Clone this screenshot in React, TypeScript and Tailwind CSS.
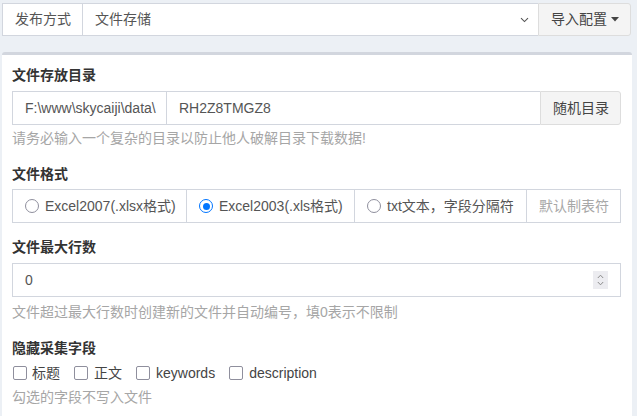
import React from "react";

const font = { fontFamily: '"Liberation Sans", "Noto Sans CJK SC", sans-serif' };

function Radio({ checked }: { checked?: boolean }) {
  return checked ? (
    <span className="flex w-[14px] h-[14px] rounded-full border-[1.5px] border-[#0075ff] items-center justify-center shrink-0">
      <span className="block w-[7px] h-[7px] rounded-full bg-[#0075ff]" />
    </span>
  ) : (
    <span className="block w-[14px] h-[14px] rounded-full border-[1.5px] border-[#8f8f9d] shrink-0" />
  );
}

function Check() {
  return <span className="block w-[14px] h-[14px] rounded-[2px] border-[1.5px] border-[#8f8f9d] shrink-0" />;
}

export default function App() {
  return (
    <div style={font} className="bg-[#ecf0f5] h-[416px] w-[637px] pl-[2px] pr-[6px] pt-[3px] text-[14px] text-[#555] overflow-hidden">
      {/* top group */}
      <div className="flex h-[33px] w-[629px]">
        <div className="w-[81px] flex items-center pl-[12px] bg-white border border-[#d2d6de] text-[#555]">发布方式</div>
        <div className="flex-1 flex items-center justify-between pl-[12px] pr-[8px] bg-white border-y border-[#d2d6de]">
          <span>文件存储</span>
          <svg width="9" height="6" viewBox="0 0 9 6" className="mr-[1px]">
            <path d="M1 1.2 L4.5 4.6 L8 1.2" fill="none" stroke="#555" strokeWidth="1.1" />
          </svg>
        </div>
        <div className="w-[93px] flex items-center pl-[12px] bg-[#f4f4f4] border border-[#ddd] rounded-r-[3px] text-[#444]">
          导入配置
          <svg width="8" height="5" viewBox="0 0 8 5" className="ml-[4px]">
            <path d="M0 0 L8 0 L4 4.5 Z" fill="#444" />
          </svg>
        </div>
      </div>

      {/* panel */}
      <div className="mt-[16px] w-[630px] h-[400px] bg-white border-t-[3px] border-[#d2d6de] rounded-t-[3px] px-[10px] pt-[10px]">
        <div className="font-bold text-[#333] leading-[20px]">文件存放目录</div>
        <div className="mt-[6px] flex h-[34px] w-[609px]">
          <div className="w-[155px] flex items-center pl-[12px] border border-[#d2d6de] text-[#555]">F:\www\skycaiji\data\</div>
          <div className="flex-1 flex items-center pl-[12px] border-y border-[#d2d6de]">RH2Z8TMGZ8</div>
          <div className="w-[81px] flex items-center pl-[12px] bg-[#f4f4f4] border border-[#ddd] rounded-r-[3px] text-[#444]">随机目录</div>
        </div>
        <div className="mt-[3px] text-[14px] leading-[20px] text-[#a6a6a6]">请务必输入一个复杂的目录以防止他人破解目录下载数据!</div>

        <div className="mt-[16px] font-bold text-[#333] leading-[20px]">文件格式</div>
        <div className="mt-[5px] flex h-[34px] w-[609px] border border-[#d2d6de]">
          <div className="w-[174px] flex items-center pl-[12px] gap-[6px] border-r border-[#d2d6de]">
            <Radio />
            <span>Excel2007(.xlsx格式)</span>
          </div>
          <div className="w-[168px] flex items-center pl-[12px] gap-[6px] border-r border-[#d2d6de]">
            <Radio checked />
            <span>Excel2003(.xls格式)</span>
          </div>
          <div className="w-[172px] flex items-center pl-[12px] gap-[6px] border-r border-[#d2d6de]">
            <Radio />
            <span>txt文本，字段分隔符</span>
          </div>
          <div className="flex-1 flex items-center pl-[12px] text-[#a8a8a8]">默认制表符</div>
        </div>

        <div className="mt-[14px] font-bold text-[#333] leading-[20px]">文件最大行数</div>
        <div className="mt-[6px] relative flex items-center h-[34px] w-[609px] border border-[#d2d6de] pl-[12px]">
          0
          <div className="absolute right-[12px] top-[7px] w-[15px] h-[18px] bg-[#ececf0] flex flex-col items-center justify-center gap-[2px]">
            <svg width="7" height="5" viewBox="0 0 7 5">
              <path d="M0.8 4 L3.5 1.2 L6.2 4" fill="none" stroke="#8a8a8a" strokeWidth="1" />
            </svg>
            <svg width="7" height="5" viewBox="0 0 7 5">
              <path d="M0.8 1 L3.5 3.8 L6.2 1" fill="none" stroke="#8a8a8a" strokeWidth="1" />
            </svg>
          </div>
        </div>
        <div className="mt-[5px] text-[14px] leading-[20px] text-[#a6a6a6]">文件超过最大行数时创建新的文件并自动编号，填0表示不限制</div>

        <div className="mt-[16px] font-bold text-[#333] leading-[20px]">隐藏采集字段</div>
        <div className="mt-[5px] flex items-center h-[20px] text-[#444]">
          <span className="ml-[1px]"><Check /></span>
          <span className="ml-[5px]">标题</span>
          <span className="ml-[14px]"><Check /></span>
          <span className="ml-[6px]">正文</span>
          <span className="ml-[14px]"><Check /></span>
          <span className="ml-[6px]">keywords</span>
          <span className="ml-[14px]"><Check /></span>
          <span className="ml-[6px]">description</span>
        </div>
        <div className="mt-[4px] text-[14px] leading-[20px] text-[#a6a6a6]">勾选的字段不写入文件</div>
      </div>
    </div>
  );
}
